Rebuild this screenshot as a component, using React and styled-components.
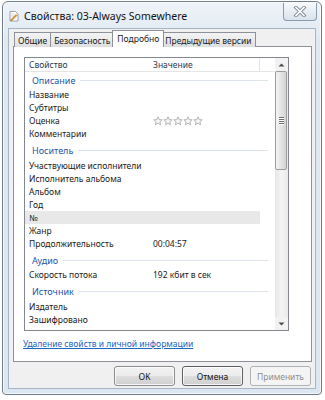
import React from "react";
import styled, { createGlobalStyle, css } from "styled-components";

const GlobalStyle = createGlobalStyle`
  html, body {
    margin: 0;
    background: #ffffff;
  }
  body {
    font-family: "Noto Sans", "Liberation Sans", sans-serif;
    font-size: 8.5px;
    color: #1a1a1a;
  }
`;

const Window = styled.div`
  box-sizing: border-box;
  width: 320px;
  height: 394px;
  margin: 1px 0 0 2px;
  padding: 0 5px 5px;
  border: 1px solid #6e7d8d;
  border-radius: 6px 6px 4px 4px;
  background: linear-gradient(#eef3f8, #dfe8f1 40px, #dce6f0);
  box-shadow: inset 0 0 0 1px rgba(255, 255, 255, 0.7);
  display: flex;
  flex-direction: column;
`;

const TitleBar = styled.div`
  height: 26px;
  display: flex;
  align-items: center;
  gap: 4px;
  padding-top: 2px;
  box-sizing: border-box;
`;

const Title = styled.span`
  font-size: 10.5px;
  color: #111;
  flex: 1;
`;

const CloseButton = styled.div`
  align-self: flex-start;
  margin-top: -1px;
  margin-right: -1px;
  width: 34px;
  height: 18px;
  box-sizing: border-box;
  border: 1px solid #8a9bb0;
  border-top: none;
  border-radius: 0 0 4px 4px;
  background: linear-gradient(#f8fafc, #e7edf4 50%, #dbe3ec);
  display: flex;
  align-items: center;
  justify-content: center;
`;

const Client = styled.div`
  flex: 1;
  border: 1px solid #a7b6c6;
  background: #f0f0f0;
  padding: 1px 3px 0 4px;
  display: flex;
  flex-direction: column;
`;

const TabStrip = styled.div`
  display: flex;
  align-items: flex-end;
  height: 17px;
  padding-left: 2px;
  margin-bottom: -1px;
  position: relative;
  z-index: 1;
`;

const Tab = styled.div`
  box-sizing: border-box;
  height: 15px;
  padding: 0 3px;
  margin-left: -1px;
  border: 1px solid #8e9199;
  border-bottom: none;
  background: linear-gradient(#f3f3f3, #ebebeb 50%, #dedede);
  display: flex;
  align-items: center;
  white-space: nowrap;
  color: #1a1a1a;
  ${(p) =>
    p.$active &&
    css`
      height: 17px;
      padding: 0 4px 1px;
      margin: 0 -2px 0 -2px;
      background: #ffffff;
      position: relative;
      z-index: 2;
    `}
`;

const Panel = styled.div`
  height: 316px;
  box-sizing: border-box;
  background: #ffffff;
  border: 1px solid #8e9199;
  padding: 10px 22px 0 10px;
  display: flex;
  flex-direction: column;
`;

const ListBox = styled.div`
  height: 274px;
  box-sizing: border-box;
  border: 1px solid #828790;
  display: flex;
`;

const ListBody = styled.div`
  flex: 1;
  display: flex;
  flex-direction: column;
  overflow: hidden;
`;

const Header = styled.div`
  height: 14px;
  box-sizing: border-box;
  border-bottom: 1px solid #e5e5e5;
  display: grid;
  grid-template-columns: 124px 111px 1fr;
  color: #2b3a4f;
`;

const HeaderCell = styled.div`
  padding-left: 4px;
  display: flex;
  align-items: center;
  border-right: ${(p) => (p.$divider ? "1px solid #e2e2e2" : "none")};
`;

const GroupRow = styled.div`
  height: 16px;
  padding-top: ${(p) => (p.$first ? "0" : "2.5px")};
  padding-left: 7px;
  padding-right: 7px;
  display: flex;
  align-items: center;
  color: #2356a8;
  font-size: 9px;
  &::after {
    content: "";
    flex: 1;
    height: 1px;
    margin-left: 5px;
    background: #dde4ec;
  }
`;

const ItemRow = styled.div`
  width: 235px;
  height: 13px;
  display: grid;
  grid-template-columns: 124px 111px;
  align-items: center;
  background: ${(p) => (p.$selected ? "#e8e8e8" : "transparent")};
`;

const Cell = styled.div`
  padding-left: 4px;
  white-space: nowrap;
  display: flex;
  align-items: center;
`;

const ScrollBar = styled.div`
  width: 13px;
  display: flex;
  flex-direction: column;
  background: linear-gradient(90deg, #e6e6e6, #f4f4f4 50%, #e9e9e9);
`;

const ScrollArrow = styled.div`
  height: 13px;
  display: flex;
  align-items: center;
  justify-content: center;
  background: #f2f2f2;
`;

const Thumb = styled.div`
  height: 99px;
  margin: 0 1px 0 0;
  box-sizing: border-box;
  border: 1px solid #9c9c9c;
  border-radius: 2px;
  background: linear-gradient(90deg, #f4f4f4, #e4e4e4 50%, #d4d4d4);
  display: flex;
  flex-direction: column;
  align-items: center;
  justify-content: center;
  gap: 1px;
`;

const Grip = styled.div`
  width: 5px;
  height: 1px;
  background: #6d6d6d;
  box-shadow: 0 1px 0 #ffffff;
`;

const Track = styled.div`
  flex: 1;
`;

const Link = styled.a`
  margin-top: 7px;
  margin-left: -1px;
  color: #1a66c2;
  text-decoration: underline;
  line-height: 12px;
`;

const ButtonRow = styled.div`
  display: flex;
  justify-content: flex-end;
  gap: 7px;
  margin-top: 4px;
  padding-right: 1px;
`;

const Button = styled.div`
  width: 61px;
  height: 20px;
  box-sizing: border-box;
  border: 1px solid ${(p) => (p.$dark ? "#5f5f5f" : "#8c8c8c")};
  border-radius: 3px;
  background: linear-gradient(#f3f3f3, #ebebeb 48%, #dddddd 52%, #cfcfcf);
  box-shadow: inset 0 0 0 1px rgba(255, 255, 255, 0.8);
  display: flex;
  align-items: center;
  justify-content: center;
  color: #111;
  ${(p) =>
    p.$disabled &&
    css`
      border-color: #adb2b5;
      background: #f4f4f4;
      box-shadow: none;
      color: #8d8d8d;
    `}
`;

const Star = () => (
  <svg width="10" height="10" viewBox="0 0 10 10">
    <path
      d="M5 0.8 L6.2 3.6 L9.2 3.8 L6.9 5.8 L7.6 8.8 L5 7.2 L2.4 8.8 L3.1 5.8 L0.8 3.8 L3.8 3.6 Z"
      fill="#f7f7f7"
      stroke="#a6a6a6"
      strokeWidth="0.8"
      strokeLinejoin="round"
    />
  </svg>
);

const FileIcon = () => (
  <svg width="12" height="12" viewBox="0 0 12 12">
    <path d="M2 1.5 H7.5 L10 4 V11 H2 Z" fill="#fdfdfd" stroke="#8a8a8a" strokeWidth="0.8" />
    <path d="M3 9.5 L8 4.5 L9 5.5 L4 10.5 L2.8 10.8 Z" fill="#e09a3a" stroke="#9c5a14" strokeWidth="0.5" />
    <path d="M3.2 6 H6 M3.2 4 H6" stroke="#c0c0c0" strokeWidth="0.6" />
  </svg>
);

const CloseGlyph = () => (
  <svg width="14" height="11" viewBox="0 0 14 11">
    <path d="M3 1.5 L11 9.5 M11 1.5 L3 9.5" stroke="#7b8794" strokeWidth="3.4" strokeLinecap="square" />
    <path d="M3 1.5 L11 9.5 M11 1.5 L3 9.5" stroke="#ffffff" strokeWidth="1.6" strokeLinecap="square" />
  </svg>
);

const Arrow = ({ up }) => (
  <svg width="7" height="4" viewBox="0 0 7 4">
    <path d={up ? "M0.5 3.5 L3.5 0.5 L6.5 3.5 Z" : "M0.5 0.5 L3.5 3.5 L6.5 0.5 Z"} fill="#4d4d4d" />
  </svg>
);

const groups = [
  {
    name: "Описание",
    items: [["Название"], ["Субтитры"], ["Оценка", "stars"], ["Комментарии"]],
  },
  {
    name: "Носитель",
    items: [
      ["Участвующие исполнители"],
      ["Исполнитель альбома"],
      ["Альбом"],
      ["Год"],
      ["№", "", true],
      ["Жанр"],
      ["Продолжительность", "00:04:57"],
    ],
  },
  { name: "Аудио", items: [["Скорость потока", "192 кбит в сек"]] },
  { name: "Источник", items: [["Издатель"], ["Зашифровано"]] },
];

export default function App() {
  return (
    <>
      <GlobalStyle />
      <Window>
        <TitleBar>
          <FileIcon />
          <Title>Свойства: 03-Always Somewhere</Title>
          <CloseButton>
            <CloseGlyph />
          </CloseButton>
        </TitleBar>
        <Client>
          <TabStrip>
            <Tab>Общие</Tab>
            <Tab>Безопасность</Tab>
            <Tab $active>Подробно</Tab>
            <Tab>Предыдущие версии</Tab>
          </TabStrip>
          <Panel>
            <ListBox>
              <ListBody>
                <Header>
                  <HeaderCell>Свойство</HeaderCell>
                  <HeaderCell $divider>Значение</HeaderCell>
                  <HeaderCell />
                </Header>
                {groups.map((g, gi) => (
                  <React.Fragment key={g.name}>
                    <GroupRow $first={gi === 0}>{g.name}</GroupRow>
                    {g.items.map(([label, value, selected]) => (
                      <ItemRow key={label} $selected={selected}>
                        <Cell>{label}</Cell>
                        <Cell>
                          {value === "stars"
                            ? [0, 1, 2, 3, 4].map((i) => <Star key={i} />)
                            : value}
                        </Cell>
                      </ItemRow>
                    ))}
                  </React.Fragment>
                ))}
              </ListBody>
              <ScrollBar>
                <ScrollArrow>
                  <Arrow up />
                </ScrollArrow>
                <Thumb>
                  <Grip />
                  <Grip />
                  <Grip />
                  <Grip />
                </Thumb>
                <Track />
                <ScrollArrow>
                  <Arrow />
                </ScrollArrow>
              </ScrollBar>
            </ListBox>
            <Link href="#">Удаление свойств и личной информации</Link>
          </Panel>
          <ButtonRow>
            <Button>OK</Button>
            <Button $dark>Отмена</Button>
            <Button $disabled>Применить</Button>
          </ButtonRow>
        </Client>
      </Window>
    </>
  );
}
